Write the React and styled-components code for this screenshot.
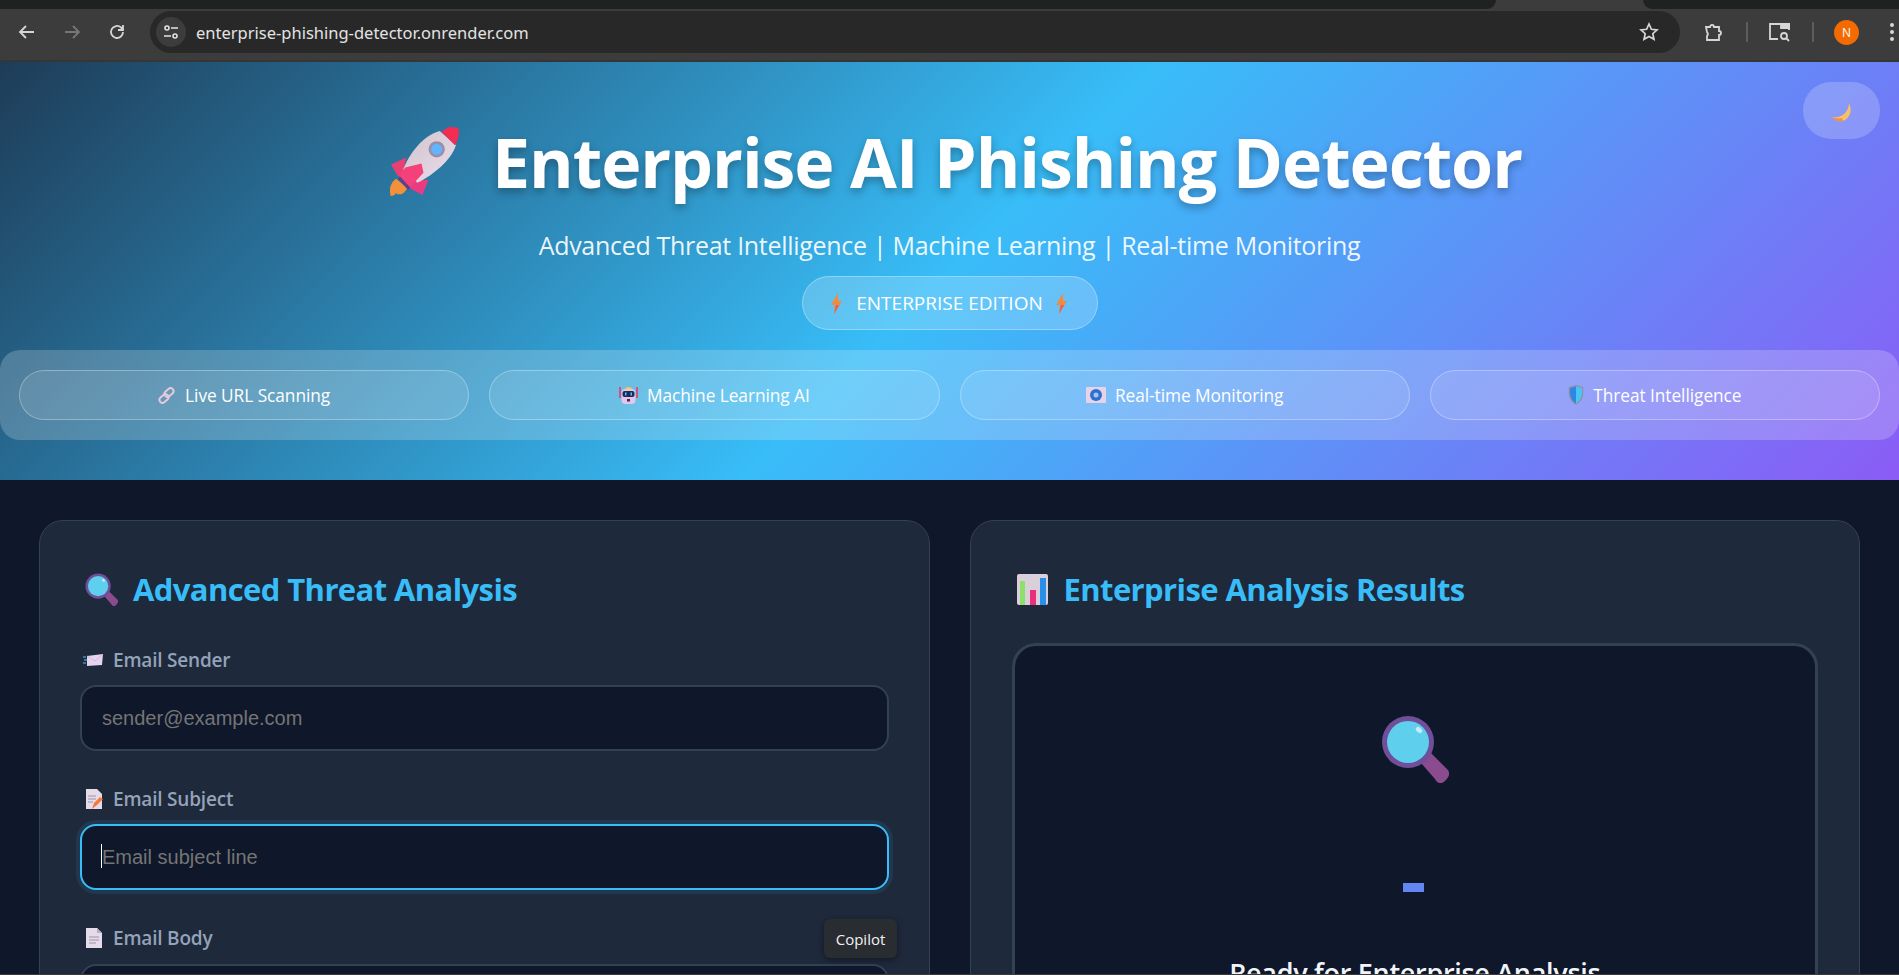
import React from "react";
import styled, { createGlobalStyle } from "styled-components";

const UI_FONT = `"Open Sans", "Noto Sans", "Liberation Sans", sans-serif`;

const Global = createGlobalStyle`
  html, body {
    margin: 0;
    height: 975px;
    overflow: hidden;
    background: #0f172a;
    font-family: ${UI_FONT};
  }
  * { box-sizing: border-box; }
`;

/* browser chrome */
const Chrome = styled.div`
  height: 62px;
  background: #3c3c3c;
  border-bottom: 2px solid #363636;
`;
const TabStrip = styled.div`
  height: 9px;
  display: flex;
  justify-content: space-between;
`;
const StripPart = styled.div`
  width: ${(p) => p.$width}px;
  background: #202221;
  border-bottom-right-radius: ${(p) => (p.$side === "left" ? 9 : 0)}px;
  border-bottom-left-radius: ${(p) => (p.$side === "right" ? 9 : 0)}px;
`;
const Toolbar = styled.div`
  height: 51px;
  display: flex;
  align-items: center;
  padding: 0 0 5px 15px;
`;
const NavButton = styled.span`
  width: 24px;
  height: 24px;
  margin-right: ${(p) => p.$gap || 0}px;
  color: ${(p) => (p.$off ? "#777" : "#d6d6d6")};
  display: flex;
  align-items: center;
  justify-content: center;
  flex: none;
`;
const Omnibox = styled.div`
  width: 1530px;
  height: 42px;
  margin: 0 22px 0 21px;
  border-radius: 21px;
  background: #282828;
  display: flex;
  align-items: center;
  padding: 0 21px 0 6px;
  flex: none;
`;
const SiteInfo = styled.span`
  width: 30px;
  height: 30px;
  border-radius: 50%;
  background: #3c3c3c;
  color: #e3e3e3;
  display: flex;
  align-items: center;
  justify-content: center;
  margin-right: 10px;
`;
const Url = styled.span`
  flex: 1;
  color: #e3e3e3;
  font-size: 16.5px;
  font-family: "Noto Sans", sans-serif;
`;
const Divider = styled.span`
  width: 2px;
  height: 20px;
  background: #5c5c5c;
  margin: 0 20px;
  flex: none;
`;
const Avatar = styled.span`
  width: 25px;
  height: 25px;
  border-radius: 50%;
  background: #f26a00;
  color: #fff;
  font-size: 12px;
  display: flex;
  align-items: center;
  justify-content: center;
  margin: 0 30px 0 0;
  flex: none;
`;

/* hero */
const Hero = styled.header`
  position: relative;
  height: 418px;
  background: linear-gradient(135deg, #1e3c58 0%, #38bdf8 50%, #8b5cf6 100%);
  display: flex;
  flex-direction: column;
  align-items: center;
  padding-top: 57px;
`;
const ThemeToggle = styled.button`
  position: absolute;
  top: 20px;
  right: 19px;
  width: 77px;
  height: 57px;
  border: 0;
  border-radius: 28px;
  background: rgba(255, 255, 255, 0.2);
  display: flex;
  align-items: center;
  justify-content: center;
  padding: 4px 0 0;
`;
const Title = styled.h1`
  margin: 0 0 0 12px;
  height: 84px;
  display: flex;
  align-items: center;
  gap: 33px;
  font-size: 68px;
  font-weight: 700;
  color: #fff;
  letter-spacing: -1.05px;
  text-shadow: 0 4px 8px rgba(0, 0, 0, 0.3);
`;
const Subtitle = styled.p`
  margin: 25px 0 0;
  height: 34px;
  line-height: 34px;
  font-size: 25px;
  font-weight: 400;
  color: rgba(255, 255, 255, 0.92);
  letter-spacing: -0.3px;
`;
const Badge = styled.div`
  margin-top: 14px;
  width: 296px;
  height: 54px;
  border-radius: 27px;
  background: rgba(255, 255, 255, 0.2);
  border: 1px solid rgba(255, 255, 255, 0.3);
  display: flex;
  align-items: center;
  justify-content: center;
  gap: 13px;
  color: #fff;
  font-size: 19px;
`;
const FeatureStrip = styled.div`
  align-self: stretch;
  margin-top: 20px;
  height: 90px;
  border-radius: 20px;
  background: rgba(255, 255, 255, 0.2);
  display: grid;
  grid-template-columns: repeat(4, 1fr);
  gap: 20px;
  padding: 20px 19px;
`;
const FeaturePill = styled.div`
  height: 50px;
  border-radius: 25px;
  background: rgba(255, 255, 255, 0.1);
  border: 1px solid rgba(255, 255, 255, 0.3);
  display: flex;
  align-items: center;
  justify-content: center;
  gap: 9px;
  color: #fff;
  font-size: 17.3px;
  letter-spacing: -0.05px;
`;

/* main area */
const Main = styled.main`
  display: grid;
  grid-template-columns: 1fr 1fr;
  gap: 40px;
  padding: 40px 39px;
`;
const Card = styled.section`
  background: #1e293b;
  border: 1px solid #334155;
  border-radius: 24px;
  padding: 40px;
  height: 700px;
`;
const CardTitle = styled.h2`
  margin: 0 0 ${(p) => p.$after}px;
  padding-left: ${(p) => p.$indent}px;
  height: 56px;
  display: flex;
  align-items: center;
  gap: ${(p) => p.$gap}px;
  font-size: 31px;
  font-weight: 700;
  color: #38bdf8;
  letter-spacing: -0.6px;
`;
const Field = styled.div`
  margin-bottom: 35px;
`;
const Label = styled.label`
  display: flex;
  align-items: center;
  gap: 10px;
  height: 26px;
  margin-bottom: 13px;
  font-size: 19px;
  font-weight: 600;
  color: #94a3b8;
  letter-spacing: -0.2px;
`;
const LabelIcon = styled.span`
  width: 23px;
  display: flex;
  justify-content: flex-end;
  flex: none;
`;
const Input = styled.input`
  display: block;
  width: 100%;
  height: 66px;
  margin-top: -1px;
  padding: 0 20px;
  border-radius: 16px;
  border: 2px solid ${(p) => (p.$focused ? "#38bdf8" : "#334155")};
  box-shadow: ${(p) => (p.$focused ? "0 0 0 4px rgba(56, 189, 248, 0.1)" : "none")};
  background: #0f172a;
  color: #fff;
  font-family: "Liberation Sans", Arial, sans-serif;
  font-size: 20px;
  outline: none;
  &::placeholder { color: #757575; opacity: 1; }
`;
const SubjectWrap = styled.div`
  position: relative;
`;
const Caret = styled.span`
  position: absolute;
  left: 21px;
  top: 20px;
  width: 1px;
  height: 24px;
  background: #fff;
`;
const TextArea = styled.div`
  height: 200px;
  border-radius: 16px;
  border: 2px solid #334155;
  background: #0f172a;
`;
const Tooltip = styled.div`
  position: absolute;
  left: 824px;
  top: 919px;
  width: 73px;
  height: 39px;
  border-radius: 6px;
  background: #292c31;
  box-shadow: 0 2px 6px rgba(0, 0, 0, 0.4);
  color: #f1f1f1;
  font-size: 15px;
  display: flex;
  align-items: center;
  justify-content: center;
`;
const ResultBox = styled.div`
  height: 560px;
  margin: 0 1px;
  border: 3px solid #334155;
  border-radius: 24px;
  background: #0f172a;
  display: flex;
  flex-direction: column;
  align-items: center;
  padding-top: 69px;
`;
const Dash = styled.span`
  display: block;
  width: 21px;
  height: 9px;
  background: #6486f2;
  margin: 100px 0 0 -2px;
`;
const ReadyTitle = styled.h3`
  margin: 62px 0 0;
  font-size: 27px;
  font-weight: 600;
  color: #f1f5f9;
  letter-spacing: -0.3px;
`;
const BottomEdge = styled.div`
  position: fixed;
  left: 0;
  right: 0;
  bottom: 0;
  height: 1px;
  background: #3a3a3a;
`;

/* emoji drawings */
const Rocket = () => (
  <svg width="70" height="69" viewBox="0 0 69 68">
    <defs>
      <linearGradient id="rocketBody" x1="0" y1="0" x2="1" y2="1">
        <stop offset="0" stopColor="#cfc4cc" />
        <stop offset="1" stopColor="#ecdcec" />
      </linearGradient>
    </defs>
    <path d="M1 62c0-5 3-9 6-11l11 9c-2 4-5 7-8 6-1 1-2 0-3-1-1 2-3 3-5 3-1-1-1-4-1-6z" fill="#f2913a" />
    <path d="M2 37l15-7-3 15-5 4z" fill="#ea3f72" />
    <path d="M20 60l13 7 6-15-14 1z" fill="#ea3b82" />
    <path d="M50 4C34 8 20 26 14 42l14 13c16-8 33-22 38-37z" fill="url(#rocketBody)" />
    <path d="M52 5c3-3 6-5 9-5 4 0 8 1 8 3 0 5-1 10-4 15z" fill="#f22c52" />
    <circle cx="47" cy="22" r="8" fill="#9a8ea6" />
    <circle cx="47" cy="22" r="5.500" fill="#63b4ff" />
    <path d="M10 48l6-8 16-4 2 9-14 15z" fill="#f5417a" />
    <path d="M10 50l10 11" stroke="#5d3f8d" strokeWidth="3" />
  </svg>
);
const Moon = () => (
  <svg width="19" height="19" viewBox="0 0 19 19">
    <path d="M17 0C20 6 19 13 13 17 8 19.500 3 18 0 14 6 15 11 13 14 9 16 6 17 3 17 0z" fill="#f6c064" />
    <path d="M0 14c3 4 7 5 11 4-1-2-1-3-1-3-3 1-7 0-10-1z" fill="#ee8f45" />
  </svg>
);
const Bolt = () => (
  <svg width="12" height="21" viewBox="0 0 12 21">
    <path d="M7 0L0 12h4l-1 9 8-13H7z" fill="#f28a3c" />
    <path d="M5 12h3l-5 9z" fill="#ea5a55" />
  </svg>
);
const LinkIcon = () => (
  <svg width="18" height="17" viewBox="0 0 18 17" fill="none" stroke="#e4c9dc" strokeWidth="2">
    <rect x="8" y="0.500" width="6" height="10" rx="3" transform="rotate(48 11 5.500)" />
    <rect x="3" y="6.500" width="6" height="10" rx="3" transform="rotate(48 6 11.500)" />
  </svg>
);
const Robot = () => (
  <svg width="19" height="18" viewBox="0 0 19 18">
    <path d="M1 1v11M18 1v11" stroke="#e8365f" strokeWidth="1.500" />
    <path d="M6 3a3.500 2 0 0 1 7 0z" fill="#f3c94e" />
    <rect x="2.500" y="3" width="14" height="15" rx="4" fill="#e3c6ec" />
    <rect x="3.500" y="5" width="12" height="6" rx="2" fill="#1d2a5a" />
    <rect x="6" y="6.500" width="1.500" height="3" fill="#4fc3f7" />
    <rect x="11.500" y="6.500" width="1.500" height="3" fill="#4fc3f7" />
    <rect x="8" y="13" width="3" height="2.500" fill="#40304f" />
  </svg>
);
const Monitor = () => (
  <svg width="20" height="16" viewBox="0 0 20 16">
    <rect width="20" height="16" rx="1" fill="#e7d3e6" />
    <circle cx="10" cy="8" r="6" fill="#2f6fd0" />
    <circle cx="10" cy="8" r="2.500" fill="#9ec6f5" />
  </svg>
);
const Shield = () => (
  <svg width="16" height="20" viewBox="0 0 16 20">
    <path d="M8 0l7 2c1 7 0 14-7 18C1 16 0 9 1 2z" fill="#8b93a8" />
    <path d="M8 1.500L2 3c-.5 6 .5 12 6 15.500z" fill="#2f86e6" />
    <path d="M8 1.500L14 3c.5 6-.5 12-6 15.500z" fill="#48c6f2" />
  </svg>
);
const Magnifier = ({ size = 33 }) => (
  <svg width={size} height={size} viewBox="0 0 34 34">
    <path d="M20 24l5-5 8 8c2 2 1 4-1 6s-4 1-5-1z" fill="#8a4c8e" />
    <circle cx="13.500" cy="13.500" r="13" fill="#6f4f9a" />
    <circle cx="13.500" cy="13.500" r="10.500" fill="#5fcfee" />
    <ellipse cx="19" cy="7.500" rx="1.800" ry="1.200" fill="#c5ecf8" transform="rotate(40 19 7.500)" />
  </svg>
);
const Envelope = () => (
  <svg width="20" height="12" viewBox="0 0 20 12">
    <path d="M4 2l16-2-1 11-15 1z" fill="#e6d4ef" />
    <path d="M4 2l8 5 8-7" fill="none" stroke="#c9b3d6" strokeWidth="0.800" />
    <path d="M0 3h3M1 6h3M0 9h3" stroke="#4fc3f7" strokeWidth="1" />
  </svg>
);
const Memo = () => (
  <svg width="17" height="20" viewBox="0 0 17 20">
    <path d="M0 0h11l5 5v15H0z" fill="#e6dbe8" />
    <path d="M2 7h8M2 10h8M2 13h5" stroke="#9c93aa" strokeWidth="1" />
    <path d="M6 20l2-6 6-6 3 2-6 6z" fill="#f47a36" />
  </svg>
);
const DocIcon = () => (
  <svg width="17" height="20" viewBox="0 0 17 20">
    <path d="M0 0h11l5 5v15H0z" fill="#e6dbe8" />
    <path d="M11 0l5 5h-5z" fill="#b9aec2" />
    <path d="M3 9h10M3 12h10M3 15h7" stroke="#9c93aa" strokeWidth="1" />
  </svg>
);
const ChartIcon = () => (
  <svg width="31" height="31" viewBox="0 0 31 31">
    <rect width="31" height="31" rx="2" fill="#d9d0dc" />
    <rect x="3" y="7" width="5" height="24" fill="#8fe06a" />
    <rect x="13" y="16" width="6" height="15" fill="#ea2f7c" />
    <rect x="23" y="4" width="6" height="27" fill="#2a8fe8" />
  </svg>
);

const features = [
  { icon: <LinkIcon />, text: "Live URL Scanning" },
  { icon: <Robot />, text: "Machine Learning AI" },
  { icon: <Monitor />, text: "Real-time Monitoring" },
  { icon: <Shield />, text: "Threat Intelligence" },
];

const App = () => (
  <>
    <Global />
    <Chrome>
      <TabStrip>
        <StripPart $side="left" $width={1496} />
        <StripPart $side="right" $width={256} />
      </TabStrip>
      <Toolbar>
        <NavButton $gap={21}>
          <svg width="20" height="20" viewBox="0 0 20 20" fill="none" stroke="currentColor" strokeWidth="1.8"><path d="M17 10H3M9 4l-6 6 6 6" /></svg>
        </NavButton>
        <NavButton $off $gap={21}>
          <svg width="20" height="20" viewBox="0 0 20 20" fill="none" stroke="currentColor" strokeWidth="1.8"><path d="M3 10h14M11 4l6 6-6 6" /></svg>
        </NavButton>
        <NavButton>
          <svg width="20" height="20" viewBox="0 0 20 20" fill="none" stroke="currentColor" strokeWidth="1.8"><path d="M16 10a6 6 0 1 1-2-4.500L16 7.500M16 3v5h-5" /></svg>
        </NavButton>
        <Omnibox>
          <SiteInfo>
            <svg width="18" height="18" viewBox="0 0 18 18" fill="none" stroke="currentColor" strokeWidth="1.6"><circle cx="5" cy="5" r="2" /><path d="M9 5h7M2 13h7" /><circle cx="13" cy="13" r="2" /></svg>
          </SiteInfo>
          <Url>enterprise-phishing-detector.onrender.com</Url>
          <svg width="20" height="20" viewBox="0 0 20 20" fill="none" stroke="#d6d6d6" strokeWidth="1.7"><path d="M10 2l2.400 5.300 5.600.6-4.200 3.800 1.200 5.600L10 14.400l-5 2.900 1.200-5.600L2 7.900l5.600-.6z" /></svg>
        </Omnibox>
        <NavButton>
          <svg width="22" height="22" viewBox="0 0 22 22" fill="none" stroke="#d6d6d6" strokeWidth="1.8"><path d="M3 6h4a2 2 0 0 1 4 0h5v4a2 2 0 0 1 0 4v5H4v-4a3 3 0 0 0 0-4z" /></svg>
        </NavButton>
        <Divider />
        <NavButton>
          <svg width="24" height="22" viewBox="0 0 24 22" fill="none" stroke="#d6d6d6" strokeWidth="1.8"><path d="M10 18H2V3h19v6" /><path d="M13 3h8v4h-8z" fill="#d6d6d6" /><circle cx="16" cy="15" r="3" /><path d="M18 17l3 3" /></svg>
        </NavButton>
        <Divider />
        <Avatar>N</Avatar>
        <svg width="6" height="20" viewBox="0 0 6 20" fill="#d6d6d6"><circle cx="3" cy="3" r="2" /><circle cx="3" cy="10" r="2" /><circle cx="3" cy="17" r="2" /></svg>
      </Toolbar>
    </Chrome>

    <Hero>
      <ThemeToggle aria-label="Toggle theme"><Moon /></ThemeToggle>
      <Title><Rocket />Enterprise AI Phishing Detector</Title>
      <Subtitle>Advanced Threat Intelligence | Machine Learning | Real-time Monitoring</Subtitle>
      <Badge><Bolt />ENTERPRISE EDITION<Bolt /></Badge>
      <FeatureStrip>
        {features.map((f) => (
          <FeaturePill key={f.text}>{f.icon}{f.text}</FeaturePill>
        ))}
      </FeatureStrip>
    </Hero>

    <Main>
      <Card>
        <CardTitle $after={30} $indent={5} $gap={15}><Magnifier />Advanced Threat Analysis</CardTitle>
        <Field>
          <Label><LabelIcon><Envelope /></LabelIcon>Email Sender</Label>
          <Input placeholder="sender@example.com" readOnly />
        </Field>
        <Field>
          <Label><LabelIcon><Memo /></LabelIcon>Email Subject</Label>
          <SubjectWrap>
            <Input $focused placeholder="Email subject line" readOnly />
            <Caret />
          </SubjectWrap>
        </Field>
        <Field>
          <Label><LabelIcon><DocIcon /></LabelIcon>Email Body</Label>
          <TextArea />
        </Field>
      </Card>
      <Card>
        <CardTitle $after={26} $indent={6} $gap={16}><ChartIcon />Enterprise Analysis Results</CardTitle>
        <ResultBox>
          <Magnifier size={68} />
          <Dash />
          <ReadyTitle>Ready for Enterprise Analysis</ReadyTitle>
        </ResultBox>
      </Card>
    </Main>
    <Tooltip>Copilot</Tooltip>
    <BottomEdge />
  </>
);

export default App;
